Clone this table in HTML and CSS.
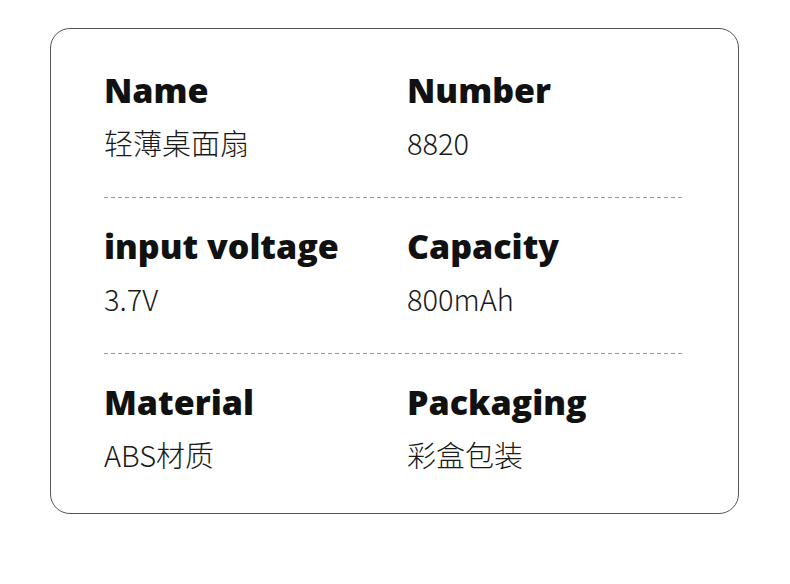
FILE: index.html
```html
<!DOCTYPE html>
<html lang="zh">
<head>
<meta charset="utf-8">
<link rel="stylesheet" href="styles.css">
</head>
<body>
<div class="card">
  <div class="row">
    <div class="cell"><h3 class="label">Name</h3><p class="value">轻薄桌面扇</p></div>
    <div class="cell"><h3 class="label">Number</h3><p class="value">8820</p></div>
  </div>
  <div class="divider"></div>
  <div class="row">
    <div class="cell"><h3 class="label">input voltage</h3><p class="value">3.7V</p></div>
    <div class="cell"><h3 class="label">Capacity</h3><p class="value">800mAh</p></div>
  </div>
  <div class="divider"></div>
  <div class="row">
    <div class="cell"><h3 class="label">Material</h3><p class="value">ABS材质</p></div>
    <div class="cell"><h3 class="label">Packaging</h3><p class="value">彩盒包装</p></div>
  </div>
</div>
</body>
</html>
```
FILE: styles.css
```css
html, body {
  margin: 0;
  padding: 0;
  background: #fff;
}
.card {
  box-sizing: border-box;
  margin: 28px 0 0 50px;
  width: 689px;
  height: 486px;
  border: 1px solid #555;
  border-radius: 20px;
  padding: 41px 0 0 53px;
}
.row {
  display: grid;
  grid-template-columns: 303px 280px;
}
.label {
  margin: 0;
  font-family: "Open Sans", "Noto Sans", sans-serif;
  font-weight: 800;
  font-size: 34px;
  line-height: 40px;
  color: #111;
}
.value {
  margin: 14px 0 0;
  font-family: "Noto Sans CJK SC", sans-serif;
  font-weight: 300;
  font-size: 29px;
  line-height: 36px;
  color: #1a1a1a;
}
.divider {
  width: 580px;
  height: 1px;
  background: repeating-linear-gradient(to right, #999 0 4px, transparent 4px 7px);
  margin: 37px 0 28px;
}
```
